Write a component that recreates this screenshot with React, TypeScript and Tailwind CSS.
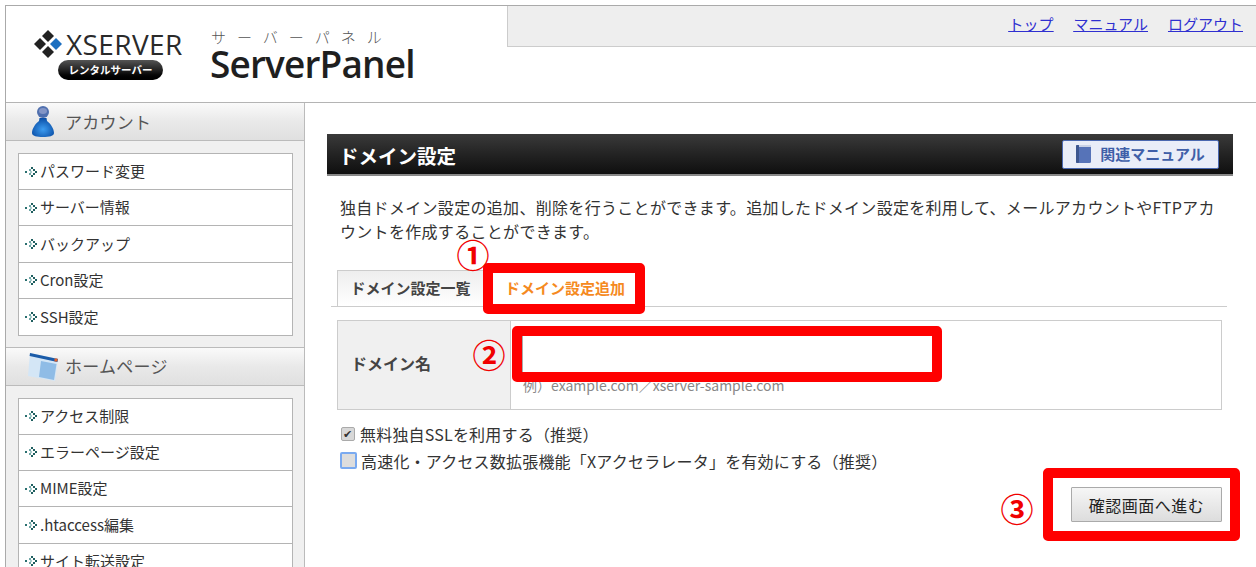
function Bullet() {
  return (
    <svg width="14" height="14" viewBox="0 0 14 14" className="shrink-0">
      <rect x="0" y="6" width="2" height="2" fill="#2a7070" />
      <rect x="6" y="2" width="2" height="2" fill="#1f5f60" />
      <rect x="4" y="4" width="2" height="2" fill="#6fa5a5" />
      <rect x="8" y="4" width="2" height="2" fill="#1f5f60" />
      <rect x="5" y="6" width="2" height="2" fill="#a8cccc" />
      <rect x="10" y="6" width="2" height="2" fill="#1f5f60" />
      <rect x="4" y="8" width="2" height="2" fill="#6fa5a5" />
      <rect x="8" y="8" width="2" height="2" fill="#1f5f60" />
      <rect x="6" y="10" width="2" height="2" fill="#1f5f60" />
    </svg>
  );
}

function PersonIcon() {
  return (
    <svg width="22" height="31" viewBox="0 0 22 31">
      <defs>
        <radialGradient id="pg" cx="0.5" cy="0.6" r="0.6">
          <stop offset="0" stopColor="#3c9cf0" />
          <stop offset="1" stopColor="#0a4ea6" />
        </radialGradient>
      </defs>
      <ellipse cx="11" cy="6" rx="6" ry="6" fill="#4f6fae" />
      <ellipse cx="11" cy="5" rx="4" ry="3" fill="#8395c6" />
      <path d="M7.5 12 H14.5 L15 15 C19 18 22 23 22 27 C22 30 17 31 11 31 C5 31 0 30 0 27 C0 23 3 18 7 15 Z" fill="url(#pg)" />
    </svg>
  );
}

function WindowIcon() {
  return (
    <svg width="32" height="32" viewBox="0 0 32 32">
      <path d="M3 2 L31 8 L28 30 L1 25 Z" fill="#d4e6f6" />
      <path d="M3 2 L31 8 L30.4 11 L2.6 5 Z" fill="#1a5ba8" />
      <path d="M14 10 L29.5 13 L27 29 L12 26 Z" fill="#8fbce6" />
      <rect x="27.5" y="7.5" width="3" height="3" fill="#e2602a" />
    </svg>
  );
}

function Heading({ icon, label, iconClass }: { icon: React.ReactNode; label: string; iconClass: string }) {
  return (
    <div className="flex h-[38px] items-center border-b border-[#bbbbbb] bg-gradient-to-b from-[#fafafa] via-[#e9e9e9] to-[#e0e0e0]">
      <div className={iconClass}>{icon}</div>
      <span className="text-[17px] tracking-[0.25px] text-[#555555]">{label}</span>
    </div>
  );
}

function Menu({ items }: { items: string[] }) {
  return (
    <div className="ml-3 mr-[11px] mt-[12px] border border-[#b4b4b4] bg-white">
      {items.map((t, i) => (
        <div
          key={t}
          className={
            i === 0
              ? "flex h-[35px] items-center gap-px pl-[6px] text-[15px] text-[#333333]"
              : "flex h-[36.4px] items-center gap-px border-t border-[#b4b4b4] pl-[6px] text-[15px] text-[#333333]"
          }
        >
          <Bullet />
          <span>{t}</span>
        </div>
      ))}
    </div>
  );
}

function Logo() {
  return (
    <div className="flex pl-[27px] pt-[23px]">
      <div className="flex w-[178px] flex-col">
        <div className="flex items-center">
          <svg width="30" height="30" viewBox="0 0 30 30" className="shrink-0">
            <path d="M15 1 L21 7 L15 13 L9 7 Z" fill="#222222" />
            <path d="M7 9 L13 15 L7 21 L1 15 Z" fill="#222222" />
            <path d="M23 9 L29 15 L23 21 L17 15 Z" fill="#1c6fc0" />
            <path d="M15 17 L21 23 L15 29 L9 23 Z" fill="#222222" />
          </svg>
          <span className="ml-[3px] font-['Open_Sans'] text-[28px] leading-[30px] tracking-[0.4px] text-[#2a2a2a]">XSERVER</span>
        </div>
        <div className="ml-[25px] mt-[1px] flex h-5 w-[105px] items-center justify-center rounded-full bg-gradient-to-b from-[#555555] via-[#222222] to-[#000000] text-[10.5px] font-bold text-white">
          レンタルサーバー
        </div>
      </div>
      <div className="-ml-px flex flex-col">
        <span className="pl-[1px] text-[15px] font-light leading-[16px] tracking-[11px] text-[#555555]">サーバーパネル</span>
        <span className="mt-[2px] font-['Open_Sans'] text-[37px] font-semibold leading-[34px] tracking-[-0.85px] text-[#1f1f1f]">ServerPanel</span>
      </div>
    </div>
  );
}

function Circled({ className, children }: { className: string; children: string }) {
  return (
    <span className={"absolute flex items-center justify-center text-[33px] font-bold leading-none text-[#f00000] " + className}>
      {children}
    </span>
  );
}

export default function App() {
  return (
    <div className="relative h-[567px] w-[1256px] overflow-hidden bg-white pl-[5px] pt-[5px] font-['Noto_Sans_CJK_JP',sans-serif]">
      <div className="h-full border-l border-t border-[#aaaaaa]">
        <header className="flex h-[97px] border-b border-[#b4b4b4]">
          <Logo />
          <nav className="ml-auto flex h-[41px] w-[749px] items-center justify-end gap-5 border-b border-l border-[#cccccc] bg-[#eeeeee] pb-1 pr-[13px] text-[15px] text-[#2f2fd0] underline">
            <a>トップ</a>
            <a>マニュアル</a>
            <a>ログアウト</a>
          </nav>
        </header>
        <div className="flex h-[465px] overflow-hidden">
          <aside className="w-[299px] shrink-0 border-r border-[#bbbbbb] bg-[#f0f0f0]">
            <Heading label="アカウント" iconClass="ml-[26px] mr-[11px] w-[22px]" icon={<PersonIcon />} />
            <Menu items={["パスワード変更", "サーバー情報", "バックアップ", "Cron設定", "SSH設定"]} />
            <div className="mt-[11px] border-t border-[#bbbbbb]">
              <Heading label="ホームページ" iconClass="ml-[21px] mr-[5px] mt-[2px] w-[33px]" icon={<WindowIcon />} />
              <Menu items={["アクセス制限", "エラーページ設定", "MIME設定", ".htaccess編集", "サイト転送設定"]} />
            </div>
          </aside>
          <main className="w-[928px] pl-[22px] pt-[31px]">
            <div className="flex h-[42px] w-[906px] items-center justify-between border-b-2 border-[#888888] bg-gradient-to-b from-[#3a3a3a] to-[#0f0f0f] pl-3 pr-[14px]">
              <h1 className="pt-[3px] text-[19.5px] font-bold text-white">ドメイン設定</h1>
              <button className="flex h-[29px] w-[157px] items-center justify-center gap-[9px] rounded-[2px] border border-[#4a68b0] bg-[#e9edf8] text-[15px] font-bold text-[#3f5fa8]">
                <svg width="15" height="18" viewBox="0 0 15 18">
                  <rect x="0" y="0" width="15" height="18" rx="1.5" fill="#5673b8" />
                  <rect x="0" y="0" width="3" height="18" rx="1" fill="#3c568f" />
                  <rect x="3" y="0" width="12" height="2" fill="#c9d2e6" />
                </svg>
                関連マニュアル
              </button>
            </div>
            <p className="ml-[13px] mt-[19px] w-[880px] text-[16px] leading-[24px] text-[#333333] [letter-spacing:0.31px]">
              独自ドメイン設定の追加、削除を行うことができます。追加したドメイン設定を利用して、メールアカウントやFTPアカウントを作成することができます。
            </p>
            <div className="ml-[4px] mt-[27px] flex h-[37px] w-[896px] items-end border-b border-[#cccccc] pl-[6px]">
              <div className="flex h-[36px] w-[147px] items-center justify-center border-l border-r border-t border-[#cccccc] bg-gradient-to-b from-[#eeeeee] to-white text-[15px] font-bold text-[#444444]">
                ドメイン設定一覧
              </div>
              <div className="flex h-[36px] w-[162px] items-center justify-center text-[15px] font-bold text-[#f58a1f]">
                ドメイン設定追加
              </div>
            </div>
            <div className="ml-[10px] mt-[13px] flex h-[90px] w-[885px] border border-[#cccccc]">
              <div className="flex w-[173px] items-center border-r border-[#cccccc] bg-[#f0f0f0] pb-1 pl-[13px] text-[16px] font-bold text-[#444444]">
                ドメイン名
              </div>
              <div className="flex-1 pl-[11px] pt-[12px]">
                <input className="block h-[42px] w-[412px] border border-[#aaaaaa] bg-white" />
                <div className="ml-px mt-px text-[14px] leading-[18px] text-[#888888]">例）example.com／xserver-sample.com</div>
              </div>
            </div>
            <label className="ml-[14px] mt-[10px] flex h-[27px] items-center gap-[5px] text-[16px] tracking-[0.2px] text-[#333333]">
              <span className="flex h-[14px] w-[14px] items-center justify-center rounded-[2px] border border-[#aaaaaa] bg-[#d8d8d8] text-[11px] leading-none text-[#333333]">✔</span>
              無料独自SSLを利用する（推奨）
            </label>
            <label className="ml-[13px] flex h-[27px] items-center gap-1 text-[16px] tracking-[0.2px] text-[#333333]">
              <span className="h-[17px] w-[17px] rounded-[2px] border-2 border-[#7aaaf0] bg-[#dddddd]" />
              高速化・アクセス数拡張機能「Xアクセラレータ」を有効にする（推奨）
            </label>
            <div className="mt-[13px] flex w-[895px] justify-end">
              <button className="h-[35px] w-[151px] rounded-[1px] border border-[#aaaaaa] bg-gradient-to-b from-[#f6f6f6] to-[#dddddd] text-[16px] tracking-[0.5px] text-[#222222]">
                確認画面へ進む
              </button>
            </div>
          </main>
        </div>
      </div>
      <div className="absolute left-[483px] top-[263px] h-[51px] w-[162px] rounded-[5px] border-[10px] border-[#ff0000]" />
      <div className="absolute left-[512px] top-[326px] h-[56px] w-[430px] rounded-[5px] border-[10px] border-[#ff0000]" />
      <div className="absolute left-[1043px] top-[468px] h-[73px] w-[197px] rounded-[5px] border-[10px] border-[#ff0000]" />
      <Circled className="left-[457px] top-[238px] h-[32px] w-[32px]">①</Circled>
      <Circled className="left-[473px] top-[338px] h-[32px] w-[32px]">②</Circled>
      <Circled className="left-[1001px] top-[492px] h-[32px] w-[32px]">③</Circled>
    </div>
  );
}
